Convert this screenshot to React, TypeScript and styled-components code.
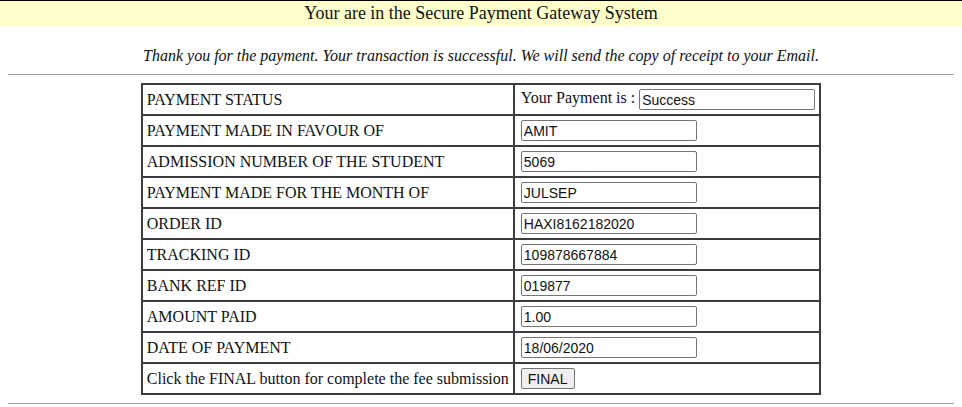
import styled, { createGlobalStyle } from "styled-components";

const Global = createGlobalStyle`
  html, body {
    margin: 0;
    background: #fff;
    font-family: "Liberation Serif", "Times New Roman", serif;
    color: #111;
  }
`;

const Page = styled.div`
  display: flex;
  flex-direction: column;
  border-top: 1px solid #000;
`;

const Banner = styled.div`
  height: 25px;
  background: #ffffcc;
  display: flex;
  align-items: center;
  justify-content: center;
  font-size: 18px;
`;

const Thanks = styled.p`
  margin: 21px 0 0;
  text-align: center;
  font-style: italic;
  font-size: 16px;
  line-height: 18px;
`;

const Rule = styled.hr`
  margin: ${(p: { $top: number }) => p.$top}px 8px 0;
  border: 0;
  border-top: 1px solid #a0a0a0;
  height: 0;
`;

const Table = styled.table`
  margin: 8px auto 0;
  width: 680px;
  border-collapse: collapse;
  border: 2px solid #3c3c3c;
  font-size: 16px;
`;

const Cell = styled.td`
  border: 2px solid #3c3c3c;
  height: 29px;
  padding: 0 4px;
  vertical-align: middle;
  white-space: nowrap;

  &:first-child {
    width: 364px;
  }

  &:last-child {
    padding-left: 6px;
  }
`;

const Field = styled.input`
  font-family: Arial, "Liberation Sans", sans-serif;
  font-size: 14px;
  color: #111;
  width: ${(p: { $w: number }) => p.$w}px;
  height: 21px;
  box-sizing: border-box;
  padding: 1px 2px;
  border: 1px solid #767676;
  border-radius: 2px;
  vertical-align: middle;
`;

const Final = styled.button`
  font-family: Arial, "Liberation Sans", sans-serif;
  font-size: 14px;
  color: #111;
  padding: 1px 6px;
  height: 21px;
  background: #efefef;
  border: 1px solid #767676;
  border-radius: 2px;
`;

const rows: [string, string][] = [
  ["PAYMENT MADE IN FAVOUR OF", "AMIT"],
  ["ADMISSION NUMBER OF THE STUDENT", "5069"],
  ["PAYMENT MADE FOR THE MONTH OF", "JULSEP"],
  ["ORDER ID", "HAXI8162182020"],
  ["TRACKING ID", "109878667884"],
  ["BANK REF ID", "019877"],
  ["AMOUNT PAID", "1.00"],
  ["DATE OF PAYMENT", "18/06/2020"],
];

export default function App() {
  return (
    <>
      <Global />
      <Page>
        <Banner>Your are in the Secure Payment Gateway System</Banner>
        <Thanks>
          Thank you for the payment. Your transaction is successful. We will
          send the copy of receipt to your Email.
        </Thanks>
        <Rule $top={9} />
        <Table>
          <tbody>
            <tr>
              <Cell>PAYMENT STATUS</Cell>
              <Cell>
                Your Payment is : <Field $w={176} defaultValue="Success" readOnly />
              </Cell>
            </tr>
            {rows.map(([label, value]) => (
              <tr key={label}>
                <Cell>{label}</Cell>
                <Cell>
                  <Field $w={176} defaultValue={value} readOnly />
                </Cell>
              </tr>
            ))}
            <tr>
              <Cell>Click the FINAL button for complete the fee submission</Cell>
              <Cell>
                <Final type="button">FINAL</Final>
              </Cell>
            </tr>
          </tbody>
        </Table>
        <Rule $top={8} />
      </Page>
    </>
  );
}
